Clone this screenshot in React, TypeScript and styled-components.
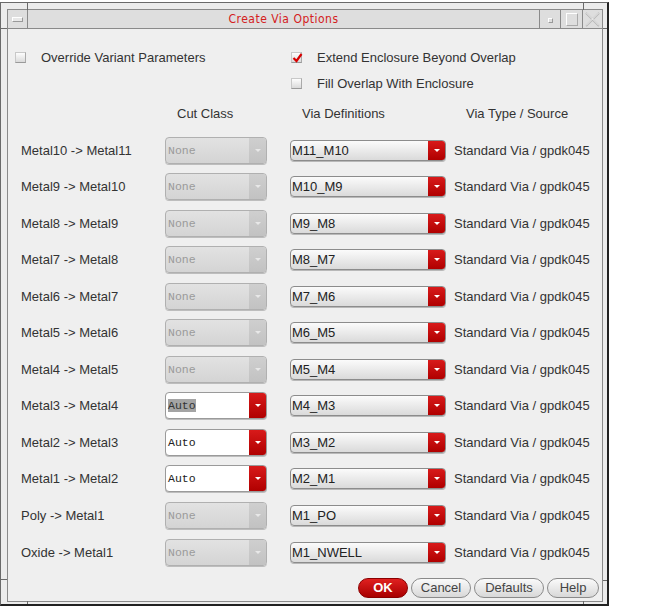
import React from 'react';
import styled, { createGlobalStyle, css } from 'styled-components';

const Global = createGlobalStyle`
  html, body { margin: 0; padding: 0; background: #ffffff; }
  body { font-family: "Liberation Sans", Arial, sans-serif; font-size: 13px; color: #333; }
`;

const Frame = styled.div`
  position: relative;
  box-sizing: border-box;
  width: 609px;
  height: 604px;
  margin-top: 2px;
  border: 1px solid #6a6a6a;
  border-right: 2px solid #222;
  border-bottom: 2px solid #222;
  background: #ececec;
  padding: 6px 4px 2px 6px;
  display: flex;
`;

const Tick = styled.div<{ $v?: boolean }>`
  position: absolute;
  background: #6a6a6a;
  ${(p) => (p.$v ? css`width: 1px; height: 7px;` : css`height: 1px; width: 6px;`)}
`;

const Panel = styled.div`
  flex: 1;
  display: flex;
  flex-direction: column;
  border: 1px solid #8a8a8a;
  background: #efefef;
`;

const TitleBar = styled.div`
  height: 18px;
  display: flex;
  background: #dedede;
  border-bottom: 1px solid #8a8a8a;
`;

const TitleCell = styled.div<{ $w: number; $left?: boolean }>`
  width: ${(p) => p.$w}px;
  display: flex;
  align-items: center;
  justify-content: center;
  ${(p) => (p.$left ? 'border-left: 1px solid #8a8a8a;' : 'border-right: 1px solid #8a8a8a;')}
`;

const MenuBtn = styled.div`
  width: 9px;
  height: 3px;
  border: 1px solid #999;
  border-top-color: #fff;
  border-left-color: #fff;
  background: #e8e8e8;
`;

const IconifyBtn = styled.div`
  width: 3px;
  height: 3px;
  margin-top: 3px;
  border: 1px solid #999;
  border-top-color: #fff;
  border-left-color: #fff;
`;

const MaxBtn = styled.div`
  width: 10px;
  height: 11px;
  border: 1px solid #aaa;
  border-top-color: #fff;
  border-left-color: #fff;
`;

const Title = styled.div`
  flex: 1;
  text-align: center;
  color: #d42020;
  font-family: "DejaVu Sans Condensed", "DejaVu Sans", sans-serif;
  font-size: 12px;
  letter-spacing: 0.5px;
  line-height: 18px;
`;

const Content = styled.div`
  flex: 1;
  display: flex;
  flex-direction: column;
  padding: 18px 3px 0 7px;
`;

const Options = styled.div`
  display: grid;
  grid-template-columns: 276px 1fr;
  grid-auto-rows: 20px;
  row-gap: 6px;
`;

const CheckItem = styled.label`
  display: flex;
  align-items: center;
  gap: 15px;
  color: #333;
`;

const Box = styled.span`
  box-sizing: border-box;
  position: relative;
  width: 11px;
  height: 11px;
  border: 1px solid #c8c8c8;
  border-bottom-color: #999;
  border-right-color: #aaa;
  background: linear-gradient(#fdfdfd, #dadada);
`;

const Check = styled.svg`
  position: absolute;
  left: 0;
  top: -2px;
`;

const Table = styled.div`
  margin-top: 7px;
  padding-left: 6px;
  display: grid;
  grid-template-columns: 144px 125px 164px 1fr;
  grid-auto-rows: 27px;
  row-gap: 9.55px;
  align-items: center;
`;

const Head = styled.div`
  padding-left: 12px;
  color: #333;
`;

const Label = styled.div`
  color: #333;
`;

const CutCombo = styled.div<{ $on: boolean }>`
  box-sizing: border-box;
  width: 102px;
  height: 27px;
  display: flex;
  border-radius: 4px;
  border: 1px solid ${(p) => (p.$on ? '#9a9a9a' : '#b0b0b0')};
  box-shadow: 0 1px 0 #bdbdbd;
  background: ${(p) => (p.$on ? '#ffffff' : 'linear-gradient(#e2e2e2, #d4d4d4)')};
  overflow: hidden;
`;

const CutText = styled.div<{ $on: boolean }>`
  flex: 1;
  display: flex;
  align-items: center;
  padding-left: 2px;
  font-family: "Liberation Mono", "Courier New", monospace;
  font-size: 11.5px;
  color: ${(p) => (p.$on ? '#222' : '#9a9a9a')};
`;

const Sel = styled.span<{ $sel?: boolean }>`
  ${(p) => p.$sel && css`background: #a4a4a4; color: #333;`}
`;

const Arrow = styled.div<{ $red: boolean; $w: number }>`
  width: ${(p) => p.$w}px;
  display: flex;
  align-items: center;
  justify-content: center;
  background: ${(p) => (p.$red ? 'linear-gradient(#d81a1a, #b00000)' : 'linear-gradient(#cfcfcf, #c2c2c2)')};
  &::after {
    content: '';
    width: 0;
    height: 0;
    border-left: 3px solid transparent;
    border-right: 3px solid transparent;
    border-top: 3px solid ${(p) => (p.$red ? '#ffffff' : '#e8e8e8')};
  }
`;

const ViaCombo = styled.div`
  box-sizing: border-box;
  width: 156px;
  height: 21px;
  display: flex;
  border-radius: 4px;
  border: 1px solid #8c8c8c;
  box-shadow: 0 1px 0 #b8b8b8;
  background: linear-gradient(#fbfbfb, #dadada);
  overflow: hidden;
`;

const ViaText = styled.div`
  flex: 1;
  display: flex;
  align-items: center;
  padding-left: 1px;
  color: #222;
`;

const TypeText = styled.div`
  color: #333;
`;

const Buttons = styled.div`
  margin-top: 12px;
  display: flex;
  justify-content: flex-end;
  gap: 3px;
`;

const Btn = styled.button<{ $w: number; $primary?: boolean }>`
  box-sizing: border-box;
  width: ${(p) => p.$w}px;
  height: 20px;
  padding: 0;
  border-radius: 10px;
  font-family: "Liberation Sans", Arial, sans-serif;
  font-size: 13px;
  ${(p) =>
    p.$primary
      ? css`
          border: 1px solid #8a0000;
          background: linear-gradient(#e02020, #a80000);
          color: #fff;
          font-weight: bold;
        `
      : css`
          border: 1px solid #8a8a8a;
          background: linear-gradient(#fafafa, #d8d8d8);
          color: #444;
        `}
`;

type Row = { label: string; cut: 'None' | 'Auto'; via: string; sel?: boolean };

const rows: Row[] = [
  { label: 'Metal10 -> Metal11', cut: 'None', via: 'M11_M10' },
  { label: 'Metal9 -> Metal10', cut: 'None', via: 'M10_M9' },
  { label: 'Metal8 -> Metal9', cut: 'None', via: 'M9_M8' },
  { label: 'Metal7 -> Metal8', cut: 'None', via: 'M8_M7' },
  { label: 'Metal6 -> Metal7', cut: 'None', via: 'M7_M6' },
  { label: 'Metal5 -> Metal6', cut: 'None', via: 'M6_M5' },
  { label: 'Metal4 -> Metal5', cut: 'None', via: 'M5_M4' },
  { label: 'Metal3 -> Metal4', cut: 'Auto', via: 'M4_M3', sel: true },
  { label: 'Metal2 -> Metal3', cut: 'Auto', via: 'M3_M2' },
  { label: 'Metal1 -> Metal2', cut: 'Auto', via: 'M2_M1' },
  { label: 'Poly -> Metal1', cut: 'None', via: 'M1_PO' },
  { label: 'Oxide -> Metal1', cut: 'None', via: 'M1_NWELL' },
];

const CheckBox: React.FC<{ checked?: boolean }> = ({ checked }) => (
  <Box>
    {checked && (
      <Check width="11" height="12" viewBox="0 0 11 12">
        <path d="M1.5 7 L4.5 10 L9.5 3" stroke="#d80000" strokeWidth="2.2" fill="none" />
      </Check>
    )}
  </Box>
);

export default function App() {
  return (
    <>
      <Global />
      <Frame>
        <Tick $v style={{ left: 26, top: 0 }} />
        <Tick $v style={{ left: 582, top: 0 }} />
        <Tick $v style={{ left: 26, bottom: 0, height: 3 }} />
        <Tick $v style={{ left: 582, bottom: 0, height: 3 }} />
        <Tick style={{ left: 0, top: 25 }} />
        <Tick style={{ right: 0, top: 25, width: 4 }} />
        <Tick style={{ left: 0, top: 576 }} />
        <Tick style={{ right: 0, top: 577, width: 4 }} />
        <Panel>
          <TitleBar>
            <TitleCell $w={19}>
              <MenuBtn />
            </TitleCell>
            <Title>Create Via Options</Title>
            <TitleCell $w={20} $left>
              <IconifyBtn />
            </TitleCell>
            <TitleCell $w={21} $left>
              <MaxBtn />
            </TitleCell>
            <TitleCell $w={19} $left>
              <svg width="15" height="15" viewBox="0 0 15 15">
                <path d="M1 1 L14 14 M14 1 L1 14" stroke="#b8b8b8" strokeWidth="2" />
                <path d="M1.5 1 L14 13.5 M13.5 1 L1 13.5" stroke="#fff" strokeWidth="0.8" />
              </svg>
            </TitleCell>
          </TitleBar>
          <Content>
            <Options>
              <CheckItem>
                <CheckBox />
                Override Variant Parameters
              </CheckItem>
              <CheckItem>
                <CheckBox checked />
                Extend Enclosure Beyond Overlap
              </CheckItem>
              <div />
              <CheckItem>
                <CheckBox />
                Fill Overlap With Enclosure
              </CheckItem>
            </Options>
            <Table>
              <div />
              <Head>Cut Class</Head>
              <Head>Via Definitions</Head>
              <Head>Via Type / Source</Head>
              {rows.map((r) => (
                <React.Fragment key={r.label}>
                  <Label>{r.label}</Label>
                  <CutCombo $on={r.cut === 'Auto'}>
                    <CutText $on={r.cut === 'Auto'}>
                      <Sel $sel={r.sel}>{r.cut}</Sel>
                    </CutText>
                    <Arrow $red={r.cut === 'Auto'} $w={17} />
                  </CutCombo>
                  <ViaCombo>
                    <ViaText>{r.via}</ViaText>
                    <Arrow $red $w={17} />
                  </ViaCombo>
                  <TypeText>Standard Via / gpdk045</TypeText>
                </React.Fragment>
              ))}
            </Table>
            <Buttons>
              <Btn $w={50} $primary>OK</Btn>
              <Btn $w={60}>Cancel</Btn>
              <Btn $w={70}>Defaults</Btn>
              <Btn $w={52}>Help</Btn>
            </Buttons>
          </Content>
        </Panel>
      </Frame>
    </>
  );
}
